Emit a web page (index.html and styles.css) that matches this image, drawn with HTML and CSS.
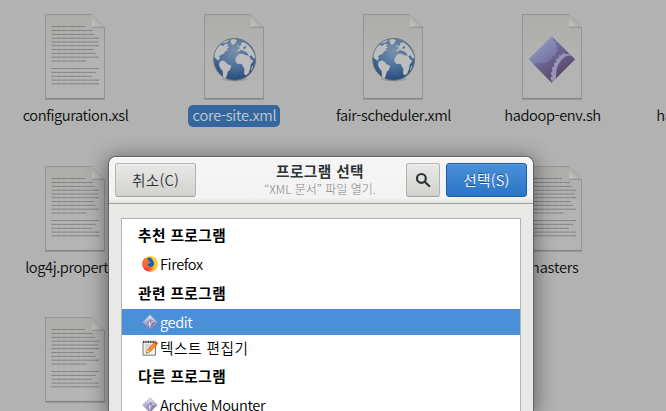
FILE: index.html
```
<!DOCTYPE html>
<html lang="ko">
<head>
<meta charset="utf-8">
<title>프로그램 선택</title>
<link rel="stylesheet" href="styles.css">
</head>
<body>
<svg class="defs" aria-hidden="true">
  <defs>
    <linearGradient id="paper" x2="0" y2="1"><stop stop-color="#acaca9"/><stop offset=".4" stop-color="#b2b2b1"/><stop offset="1" stop-color="#b5b5b5"/></linearGradient>
    <linearGradient id="fold" x1="0" y1="1" x2="1" y2="0"><stop stop-color="#c4c4c4"/><stop offset="1" stop-color="#999"/></linearGradient>
    <radialGradient id="ocean" cx=".5" cy=".3" r=".72"><stop stop-color="#7c90a9"/><stop offset=".45" stop-color="#5576a0"/><stop offset="1" stop-color="#23487a"/></radialGradient>
    <linearGradient id="gem" x2=".7" y2="1"><stop stop-color="#9ca6c8"/><stop offset=".5" stop-color="#7b7aa8"/><stop offset="1" stop-color="#553654"/></linearGradient>
    <linearGradient id="gemsmall" x2="0" y2="1"><stop stop-color="#e9ebfa"/><stop offset=".5" stop-color="#b5b1d6"/><stop offset="1" stop-color="#8a6c96"/></linearGradient>
    <linearGradient id="fire" x1="1" x2="0" y2="1"><stop stop-color="#fff044"/><stop offset=".4" stop-color="#ffb21c"/><stop offset=".7" stop-color="#ff4b2b"/><stop offset="1" stop-color="#e51080"/></linearGradient>
  </defs>
  <symbol id="page" viewBox="0 0 62 88">
    <path d="M1 2H48L61 15V87H1z" fill="#777" opacity=".45"/>
    <path d="M1.5 1.5H47.5L60.5 14.5V85.5H1.5z" fill="url(#paper)" stroke="#8f8f8e" stroke-width=".8"/>
    <path d="M2 85.4H60.3" stroke="#7e7e7e" stroke-width=".7"/>
    <path d="M48 2V14H60z" fill="url(#fold)"/>
    <path d="M48 14.2H60.5" stroke="#888" stroke-width=".8"/>
  </symbol>
  <symbol id="text-file" viewBox="0 0 62 88">
    <use href="#page"/>
    <g stroke="#7c7c7c" stroke-width=".95" stroke-dasharray="3.2 .35 1.7 .3 4.1 .4 2.3 .3">
      <path d="M7.5 13.5H41M7.5 17.5H49M7.5 21.4H51M7.5 25.2H55M7.5 29H54M7.5 32.7H55M7.5 36.6H50M7.5 40.4H52M7.5 44.2H55M7.5 48H43M7.5 55.5H55M7.5 59.4H52M7.5 63.3H48M7.5 67.1H55M7.5 70.8H55"/>
    </g>
  </symbol>
  <symbol id="web-file" viewBox="0 0 62 88">
    <use href="#page"/>
    <g transform="translate(1 1) scale(.33333) translate(-102 -42)">
      <ellipse cx="194" cy="238" rx="40" ry="6" fill="#777" opacity=".35"/>
      <circle cx="194" cy="178" r="63" fill="url(#ocean)" stroke="#74747c" stroke-width="3"/>
      <g fill="#bcbdbd">
        <path d="M133 172Q134 148 152 134L160 138 166 131 176 132 171 138 178 142 169 147 175 150 166 154 160 162 151 166 147 170 151 175 145 180 150 185 142 180z"/>
        <path d="M149 185L158 181 168 186 172 192 184 197 180 209 173 216 171 226 166 236 159 230 158 213 150 203 147 194z"/>
        <path d="M154 131Q166 121 178 119L172 126 163 129zM181 119L191 117 201 120 196 130 188 136 183 129zM202 136l5 1-2 4-4-1z"/>
        <path d="M203 157L202 150 210 145 207 140 214 135 213 129 222 127Q247 140 256 171L252 177 244 166 238 169 230 159 222 158 219 151 212 149 208 156z"/>
        <path d="M197 174L206 162 219 161 224 165 237 167 244 179 251 181 242 194 240 208 236 219 229 226 222 222 223 207 218 198 215 191 203 192 196 184zM246 199l4-2-4 12-3 2z"/>
      </g>
      <path d="M204 152l8 3 12-1 11 7-13-1-16-3zM219 144l7-7 3 5-5 6z" fill="#5576a0"/>
    </g>
  </symbol>
  <symbol id="script-file" viewBox="0 0 62 88">
    <use href="#page"/>
    <g transform="translate(1 1) scale(.33333) translate(-97 -42)">
      <clipPath id="gem-clip"><path d="M186 109L256 178 186 248 117 178z"/></clipPath>
      <path d="M186 109L256 178 186 248 117 178z" fill="url(#gem)"/>
      <g clip-path="url(#gem-clip)">
        <path d="M188 100L191 124 198 122 197 135 204 137 200 148 206 151 199 157 196 169 188 169 187 179 179 176 177 188 168 185 163 193 157 187 149 192 144 187 138 192 120 190 188 256 266 178z" fill="#574c79" opacity=".4"/>
        <path d="M260 162H228l-8-4-3 8-9 0 0 9-9 2 1 9-8 4 2 9-8 5 3 9-6 6 4 8-5 7 5 12 12-7Q196 190 226 170 240 163 260 170z" fill="#a3a0c6" opacity=".85"/>
      </g>
    </g>
  </symbol>
  <symbol id="gem-icon" viewBox="0 0 16 16">
    <path d="M8 .7L15.4 8 8 15.4.6 8z" fill="url(#gemsmall)" stroke="#9992b8" stroke-width=".6"/>
    <path d="M8 5L14.3 8 8 14.3 8.2 9 4.3 9.2 7 6.5z" fill="#706094" opacity=".5"/>
    <path d="M8 13.5C7.7 10 9.6 7.4 12.5 7M7.5 7.5v4" fill="none" stroke="#dfe0f2" stroke-width="1"/>
  </symbol>
</svg>

<main class="desktop">
  <figure class="file"><svg><use href="#text-file"/></svg><figcaption>configuration.xsl</figcaption></figure>
  <figure class="file selected"><svg><use href="#web-file"/></svg><figcaption>core-site.xml</figcaption></figure>
  <figure class="file"><svg><use href="#web-file"/></svg><figcaption>fair-scheduler.xml</figcaption></figure>
  <figure class="file"><svg><use href="#script-file"/></svg><figcaption>hadoop-env.sh</figcaption></figure>
  <figure class="file"><figcaption class="clipped">hadoop-metrics2</figcaption></figure>
  <figure class="file row-two"><svg><use href="#text-file"/></svg><figcaption>log4j.properties</figcaption></figure>
  <figure class="file masters"><svg><use href="#text-file"/></svg><figcaption>masters</figcaption></figure>
  <figure class="file row-three"><svg><use href="#text-file"/></svg></figure>
</main>

<section class="dialog">
  <header class="header">
    <button class="btn cancel">취소(C)</button>
    <div class="title"><h1>프로그램 선택</h1><p>“XML 문서” 파일 열기.</p></div>
    <button class="btn search"><svg viewBox="0 0 16 16"><circle cx="6.4" cy="6.4" r="4.4"/><path d="M9.7 9.7L14.2 14"/></svg></button>
    <button class="btn primary">선택(S)</button>
  </header>
  <div class="content">
    <div class="list">
      <h2>추천 프로그램</h2>
      <div class="app"><svg viewBox="0 0 16 16"><circle cx="8" cy="8" r="7.8" fill="url(#fire)"/><path d="M4.8 2.7C8-.1 12.2 2 12.4 6.5c.2 4-4.2 6-7.3 3.3-1.2-1.2-.8-2.4.5-2.6l2 .2 1-1.2-2.1-.7z" fill="#175fb8"/><path d="M.6 6.5C1 4 2 3 2.7 2.1L4 4l2-.2 1.5 2.8-2 1.2C5 9 6 10 7.6 10.4 5 12.5 2 11.5.8 10z" fill="#ff6a2a"/><path d="M8 .3c5 0 8 4.8 7.4 9-1 4.8-6 7-9.5 5.4 4 .2 5.8-2 6.2-5.5C12.8 5.4 9.7 3.6 8 .3z" fill="#ffc629"/></svg><span>Firefox</span></div>
      <h2>관련 프로그램</h2>
      <div class="app active"><svg><use href="#gem-icon"/></svg><span>gedit</span></div>
      <div class="app editor"><svg viewBox="0 0 16 16"><path d="M1 2.2h12.5v13H1z" fill="#f1f1ed" stroke="#777a73"/><path d="M1 1.8h12.6" stroke="#343734" stroke-width="2" stroke-dasharray="1 .7"/><path d="M3 5h7M3 7h6M3 9h4M3 11h3" stroke="#aaa" stroke-width=".7"/><path d="M4.5 13.2L5.4 9.7 12.5 2.2 15 4.6 8 12z" fill="#f58d21" stroke="#b65410" stroke-width=".5"/><path d="M12 2.5L13.4 1 16 3.3 14.7 4.9z" fill="#df3d3d"/><path d="M4.5 13.2L5.4 9.7 8 12z" fill="#f5d4a1"/><path d="M4.3 13.4l.5-1.6 1.1 1z" fill="#333"/></svg><span class="hangul">텍스트 편집기</span></div>
      <h2>다른 프로그램</h2>
      <div class="app"><svg><use href="#gem-icon"/></svg><span>Archive Mounter</span></div>
    </div>
  </div>
</section>
</body>
</html>
```
FILE: styles.css
```
* { box-sizing: border-box; }
html { overflow: hidden; }
body {
  margin: 0;
  width: 666px;
  height: 411px;
  overflow: hidden;
  position: relative;
  background: #b2b2b2;
  color: #0c0d0d;
  font: 350 14.67px/20px "Noto Sans CJK KR", "Noto Sans", sans-serif;
}
.defs { position: absolute; width: 0; height: 0; }
.desktop {
  display: grid;
  grid-template-columns: repeat(5, 159px);
  grid-template-rows: 152px 151px 108px;
  height: 411px;
  margin-left: -5px;
  padding-top: 13px;
  width: 671px;
  overflow: hidden;
}
.file { margin: 0; display: flex; flex-direction: column; align-items: center; letter-spacing: -.4px; }
.file svg { width: 62px; height: 88px; flex: none; }
.file figcaption {
  margin-top: 4px;
  height: 22px;
  padding: 0 3px 0 5px;
  line-height: 20px;
  border-radius: 5px;
  white-space: nowrap;
}
.file .clipped { margin-top: 92px; }
.selected { letter-spacing: -.25px; }
.selected figcaption { background: #35679e; color: #c3cbd4; width: 92px; text-align: center; }
.row-two { grid-row: 2; grid-column: 1; }
.masters { grid-row: 2; grid-column: 4; letter-spacing: -.2px; }
.row-three { grid-row: 3; grid-column: 1; }

.dialog {
  position: absolute;
  left: 109px;
  top: 157px;
  width: 424px;
  height: 254px;
  overflow: hidden;
  border-radius: 7px 7px 0 0;
  background: #e8e8e6;
  box-shadow: 0 0 0 1px #646464, 0 3px 20px 3px rgba(0,0,0,.43);
}
.header {
  height: 47px;
  display: flex;
  align-items: flex-start;
  padding: 6px;
  border-radius: 7px 7px 0 0;
  border-bottom: 1px solid #a1a19c;
  background: linear-gradient(#f5f5f5, #f3f3f3 88%, #e3e3e1);
  box-shadow: inset 0 1px #fff;
}
.btn {
  margin: 0;
  height: 34px;
  padding: 0;
  border: 1px solid #b4b4af;
  border-bottom-color: #a1a19c;
  border-radius: 3px;
  background: linear-gradient(#e8e8e6, #d2d2cf);
  color: #2e3436;
  box-shadow: inset 0 1px #f1f1ef;
  font: inherit;
  line-height: 30px;
}
.cancel { width: 81px; letter-spacing: .2px; }
.title { width: 210px; text-align: center; padding-left: 38px; color: #2e3436; white-space: nowrap; }
.title h1 { margin: -2px 0 0; font-size: 14.67px; line-height: 20px; font-weight: 700; letter-spacing: .4px; }
.title p { margin: 0; font-size: 12px; line-height: 16px; font-weight: 300; color: #7e8382; }
.search { width: 34px; display: flex; align-items: center; justify-content: center; }
.search svg { width: 16px; height: 16px; fill: none; stroke: #2e3436; stroke-width: 2.2; stroke-linecap: round; }
.primary {
  width: 81px;
  margin-left: 6px;
  color: #fff;
  border-color: #1c5da5;
  background: linear-gradient(#4a90d9, #2a76c6);
  box-shadow: inset 0 1px #5b9cdf;
  text-shadow: 0 -1px #1c5187;
  letter-spacing: .2px;
}
.content { padding: 14px 12px 0; }
.list { height: 193px; overflow: hidden; padding-top: 3px; background: #fff; border: 1px solid #b3b3af; border-bottom: 0; color: #000; }
.list h2 { margin: 0; padding-left: 16px; height: 29px; font-size: 14.67px; line-height: 25px; font-weight: 700; letter-spacing: .45px; }
.app { height: 29px; display: flex; align-items: center; padding: 0 0 3px 20px; letter-spacing: -.4px; }
.app svg { width: 16px; height: 16px; flex: none; margin-right: 2px; }
.app span { margin-top: -1px; }
.app.active { height: 26px; padding-bottom: 0; background: #4a90d9; color: #fff; }
.app.editor { height: 28px; padding-bottom: 2px; }
.app .hangul { margin-top: 0; letter-spacing: .5px; }
```
